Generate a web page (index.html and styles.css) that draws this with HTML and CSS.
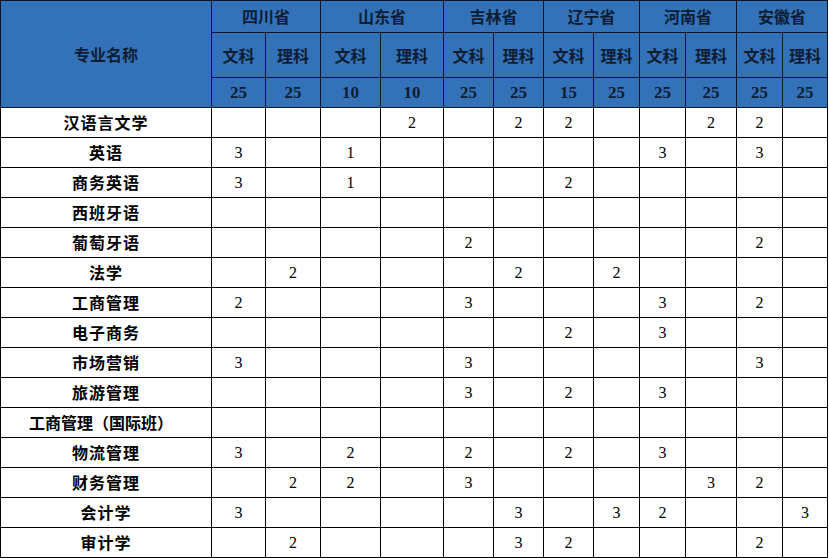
FILE: index.html
```html
<!DOCTYPE html>
<html lang="zh">
<head>
<meta charset="utf-8">
<title>招生计划</title>
<link rel="stylesheet" href="styles.css">
</head>
<body>
<table class="plan">
  <colgroup>
    <col class="c-name">
    <col class="c54"><col class="c55"><col class="c60"><col class="c63">
    <col class="c50"><col class="c50"><col class="c50"><col class="c46">
    <col class="c46"><col class="c51"><col class="c46"><col class="c45">
  </colgroup>
  <thead>
    <tr class="h1">
      <th rowspan="3" class="name-head">专业名称</th>
      <th colspan="2">四川省</th>
      <th colspan="2">山东省</th>
      <th colspan="2">吉林省</th>
      <th colspan="2">辽宁省</th>
      <th colspan="2">河南省</th>
      <th colspan="2">安徽省</th>
    </tr>
    <tr class="h2">
      <th>文科</th><th>理科</th><th>文科</th><th>理科</th><th>文科</th><th>理科</th>
      <th>文科</th><th>理科</th><th>文科</th><th>理科</th><th>文科</th><th>理科</th>
    </tr>
    <tr class="h3">
      <th>25</th><th>25</th><th>10</th><th>10</th><th>25</th><th>25</th>
      <th>15</th><th>25</th><th>25</th><th>25</th><th>25</th><th>25</th>
    </tr>
  </thead>
  <tbody>
    <tr><td class="name">汉语言文学</td><td></td><td></td><td></td><td>2</td><td></td><td>2</td><td>2</td><td></td><td></td><td>2</td><td>2</td><td></td></tr>
    <tr><td class="name">英语</td><td>3</td><td></td><td>1</td><td></td><td></td><td></td><td></td><td></td><td>3</td><td></td><td>3</td><td></td></tr>
    <tr><td class="name">商务英语</td><td>3</td><td></td><td>1</td><td></td><td></td><td></td><td>2</td><td></td><td></td><td></td><td></td><td></td></tr>
    <tr><td class="name">西班牙语</td><td></td><td></td><td></td><td></td><td></td><td></td><td></td><td></td><td></td><td></td><td></td><td></td></tr>
    <tr><td class="name">葡萄牙语</td><td></td><td></td><td></td><td></td><td>2</td><td></td><td></td><td></td><td></td><td></td><td>2</td><td></td></tr>
    <tr><td class="name">法学</td><td></td><td>2</td><td></td><td></td><td></td><td>2</td><td></td><td>2</td><td></td><td></td><td></td><td></td></tr>
    <tr><td class="name">工商管理</td><td>2</td><td></td><td></td><td></td><td>3</td><td></td><td></td><td></td><td>3</td><td></td><td>2</td><td></td></tr>
    <tr><td class="name">电子商务</td><td></td><td></td><td></td><td></td><td></td><td></td><td>2</td><td></td><td>3</td><td></td><td></td><td></td></tr>
    <tr><td class="name">市场营销</td><td>3</td><td></td><td></td><td></td><td>3</td><td></td><td></td><td></td><td></td><td></td><td>3</td><td></td></tr>
    <tr><td class="name">旅游管理</td><td></td><td></td><td></td><td></td><td>3</td><td></td><td>2</td><td></td><td>3</td><td></td><td></td><td></td></tr>
    <tr><td class="name name-left">工商管理（国际班）</td><td></td><td></td><td></td><td></td><td></td><td></td><td></td><td></td><td></td><td></td><td></td><td></td></tr>
    <tr><td class="name">物流管理</td><td>3</td><td></td><td>2</td><td></td><td>2</td><td></td><td>2</td><td></td><td>3</td><td></td><td></td><td></td></tr>
    <tr><td class="name">财务管理</td><td></td><td>2</td><td>2</td><td></td><td>3</td><td></td><td></td><td></td><td></td><td>3</td><td>2</td><td></td></tr>
    <tr><td class="name">会计学</td><td>3</td><td></td><td></td><td></td><td></td><td>3</td><td></td><td>3</td><td>2</td><td></td><td></td><td>3</td></tr>
    <tr><td class="name">审计学</td><td></td><td>2</td><td></td><td></td><td></td><td>3</td><td>2</td><td></td><td></td><td></td><td>2</td><td></td></tr>
  </tbody>
</table>
</body>
</html>
```

FILE: styles.css
```css
html, body {
  margin: 0;
  padding: 0;
  background: #ffffff;
}

.plan {
  border-collapse: collapse;
  table-layout: fixed;
  width: 828px;
  font-family: "Noto Sans CJK SC", "Noto Sans", sans-serif;
}

.c-name { width: 211px; }
.c54 { width: 54px; }
.c55 { width: 55px; }
.c60 { width: 60px; }
.c63 { width: 63px; }
.c50 { width: 50px; }
.c51 { width: 51px; }
.c46 { width: 46px; }
.c45 { width: 45px; }

.plan th,
.plan td {
  border: 1px solid #000000;
  padding: 0;
  text-align: center;
  vertical-align: middle;
  overflow: hidden;
  white-space: nowrap;
}

.plan th {
  background: #3372b9;
  color: #0f1d33;
  font-weight: 700;
  font-size: 16px;
  border-color: #0b1526;
}

.h1 th { height: 30px; line-height: 22px; padding-bottom: 1px; }
.h2 th { height: 44px; }
.h3 th {
  height: 29px;
  font-family: "Liberation Serif", "DejaVu Serif", serif;
  font-size: 17px;
}

.name-head { font-size: 16px; padding-bottom: 2px; }

.plan td {
  height: 29px;
  font-family: "Liberation Serif", "DejaVu Serif", serif;
  font-size: 16px;
  color: #000000;
}

.plan td.name {
  font-family: "Noto Sans CJK SC", "Noto Sans", sans-serif;
  font-weight: 700;
  font-size: 16px;
  letter-spacing: 1px;
  line-height: 20px;
  padding-bottom: 2px;
  height: 27px;
}

.plan td.name-left {
  text-align: left;
  padding-left: 28px;
  letter-spacing: 0;
}
```
